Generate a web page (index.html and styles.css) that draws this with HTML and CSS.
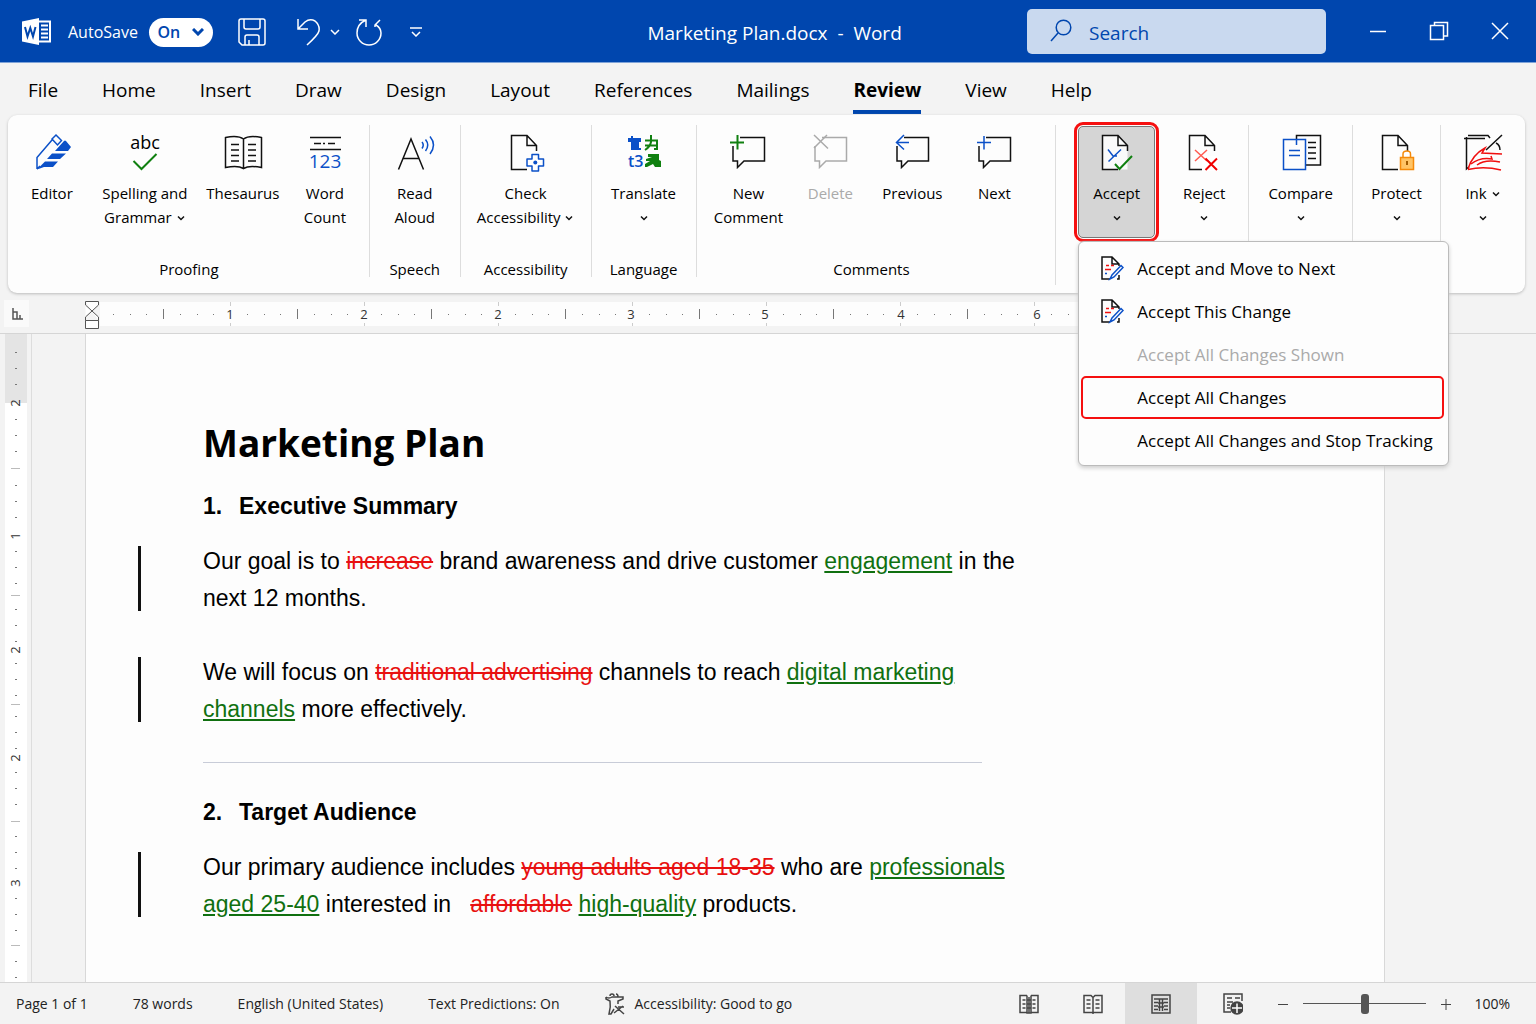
FILE: index.html
```html
<!DOCTYPE html>
<html lang="en">
	<head>
		<meta charset="UTF-8">
		<title>Marketing Plan.docx - Word</title>
		<link rel="stylesheet" href="styles.css">
	</head>
	<body>
		<!-- shared icon parts -->
		<svg class="defs" width="0" height="0" aria-hidden="true">
			<symbol id="chev" viewBox="0 0 10 10"><path d="M2 3.5L5 6.5L8 3.5"/></symbol>
			<symbol id="bubble" viewBox="0 0 40 40"><path d="M12 4.5H36.5V28H16L9.5 34.5V28H5V13"/></symbol>
			<symbol id="doc" viewBox="0 0 40 40"><path d="M21 36.5H5.5V2.5H21L30.5 12.5V18M21 2.5V12.5H30.5"/></symbol>
			<symbol id="edit" viewBox="0 0 24 26">
				<path class="k" d="M10 24H2V2H12L19 9V11M12 2V9H19M19 20V24H17"/>
				<path class="r" d="M6 10.5h3M11 10.5h3M5 14.500h6"/>
				<path class="b" d="M5 18.5h2M21 10.500L23 12.500L14 22L10 24L12 20Z"/>
			</symbol>
		</svg>

		<header class="titlebar">
			<div class="quick">
				<svg class="logo" width="30" height="28" viewBox="0 0 30 28">
					<path d="M17 3.500H28V23.500H17" fill="none" stroke="#fff" stroke-width="2"/>
					<path d="M19 7.500h7M19 11.500h7M19 15.500h7M19 19.500h7" stroke="#fff" stroke-width="2"/>
					<path d="M0 3.500L17 0V27L0 23.500Z" fill="#fff"/>
					<path d="M3 9L5.500 18.500L8.300 10L11 18.500L13.500 9" fill="none" stroke="#0046ae" stroke-width="2"/>
				</svg>
				<span class="auto">AutoSave</span>
				<button class="toggle">On
					<svg width="12" height="8" viewBox="0 0 12 8"><path d="M1 1L6 6L11 1" fill="none" stroke="#0046ae" stroke-width="3"/></svg>
				</button>
				<button class="qbtn save" aria-label="Save">
					<svg width="28" height="28" viewBox="0 0 28 28"><path d="M3 1H25Q27 1 27 3V25Q27 27 25 27H4L1 24V3Q1 1 3 1ZM6 1V9Q6 11 8 11H20Q22 11 22 9V1M7 27V19Q7 17 9 17H19Q21 17 21 19V27M11 27V22"/></svg>
				</button>
				<button class="qbtn undo" aria-label="Undo">
					<svg width="24" height="28" viewBox="0 0 24 28"><path d="M1 1V11H11M1 11L8 4Q13 0 18 3Q23 7 22 13Q21 17 10 27"/></svg>
					<svg width="10" height="6" viewBox="0 0 10 6"><path d="M1 1L5 5L9 1"/></svg>
				</button>
				<button class="qbtn redo" aria-label="Redo">
					<svg width="26" height="28" viewBox="0 0 26 28"><path d="M3 2H10V9M10 2Q1 6 1 15A12 12 0 0 0 25 15Q25 10 20 7M24 2L19 7V9"/></svg>
				</button>
				<button class="qbtn more" aria-label="Customize toolbar">
					<svg width="12" height="10" viewBox="0 0 12 10"><path d="M0 1H12M2 5L6 9L10 5"/></svg>
				</button>
			</div>
			<h1>Marketing Plan.docx&nbsp; -&nbsp; Word</h1>
			<div class="right">
				<label class="search">
					<svg width="22" height="24" viewBox="0 0 22 24"><circle cx="13.500" cy="8.500" r="7.300"/><path d="M8 14L1 22"/></svg>
					<input type="text" placeholder="Search" aria-label="Search">
				</label>
				<button class="win" aria-label="Minimize"><svg width="20" height="20" viewBox="0 0 20 20"><path d="M2 10.500H18"/></svg></button>
				<button class="win" aria-label="Restore"><svg width="20" height="20" viewBox="0 0 20 20"><path d="M1.500 4.500H14.500V18.500H1.500ZM5.500 4V1.500H18.500V15H15"/></svg></button>
				<button class="win" aria-label="Close"><svg width="20" height="20" viewBox="0 0 20 20"><path d="M2 2L18 18M18 2L2 18"/></svg></button>
			</div>
		</header>

		<nav class="tabs">
			<a href="#">File</a>
			<a href="#">Home</a>
			<a href="#">Insert</a>
			<a href="#">Draw</a>
			<a href="#">Design</a>
			<a href="#">Layout</a>
			<a href="#">References</a>
			<a href="#">Mailings</a>
			<a href="#" class="on">Review</a>
			<a href="#">View</a>
			<a href="#">Help</a>
		</nav>

		<section class="ribbon">
			<div class="group proofing">
				<div class="tools">
					<button class="tool w80">
						<svg class="ico" viewBox="0 0 40 40"><path class="b" d="M5 36V24.500L20 7M5 36L8 33M20 6L24 2L29.500 7.500L25.500 12Z"/><path fill="#0b50c8" d="M32 8Q33 7 34 8L39 14L36 18H23ZM20 20.500H34L28 26H15ZM13 28.500H26L21 34H12L5 36.500Z"/></svg>
						<span>Editor</span>
					</button>
					<button class="tool w106">
						<svg class="ico" viewBox="0 0 40 40"><text x="20" y="16" class="abc">abc</text><path class="g" d="M8.500 28L16.500 36L31.500 21"/></svg>
						<span>Spelling and<br>Grammar <svg class="cv"><use href="#chev"/></svg></span>
					</button>
					<button class="tool w90">
						<svg class="ico" viewBox="0 0 40 40"><path class="k" d="M20.500 6Q15 2 2.500 4.500V34.500Q15 32 20.500 35.500Q26 32 38.500 34.500V4.500Q26 2 20.500 6V35.500M8 11.500h8M8 17h8M8 22.500h8M8 28h8M25 11.500h8M25 17h8M25 22.500h8M25 28h8"/></svg>
						<span>Thesaurus</span>
					</button>
					<button class="tool w74">
						<svg class="ico" viewBox="0 0 40 40"><path class="k" d="M5 4.500H36M9 10.500h7M18 10.500h2M23 10.500h7M5 16.500H36"/><text x="20" y="35" class="num">123</text></svg>
						<span>Word<br>Count</span>
					</button>
				</div>
				<p>Proofing</p>
			</div>
			<div class="group">
				<div class="tools">
					<button class="tool w80">
						<svg class="ico" viewBox="0 0 40 40"><path class="k" d="M3.500 36.500L16 6L28.500 36.500M8 25.500H24"/><path class="b" d="M27 9Q29.500 12 27 15.500M30.500 6.500Q35 12 30.500 18M35 3.500Q42 12 35 21"/></svg>
						<span>Read<br>Aloud</span>
					</button>
				</div>
				<p>Speech</p>
			</div>
			<div class="group">
				<div class="tools">
					<button class="tool w106">
						<svg class="ico" viewBox="0 0 40 40"><use class="k" href="#doc"/><path d="M26 21.500H32.500V26H37.500V33H32.500V38H26V33H21V26H26Z" fill="#fff" stroke="#0b50c8" stroke-width="1.500" stroke-linejoin="round"/><circle cx="29.300" cy="29.500" r="2" fill="#0b50c8"/></svg>
						<span>Check<br>Accessibility <svg class="cv"><use href="#chev"/></svg></span>
					</button>
				</div>
				<p>Accessibility</p>
			</div>
			<div class="group">
				<div class="tools">
					<button class="tool w90">
						<svg class="ico" viewBox="0 0 40 40">
							<path fill="#0b50c8" d="M4 5H7V3H9V5H17V9H15V15H17V17H7V9H4Z"/>
							<text x="4" y="34" class="t3">t3</text>
							<path d="M21 7.500H33V16H30M27 2V9Q26 14 21 17M21 12.500H33" fill="none" stroke="#108010" stroke-width="2"/>
							<path fill="#108010" d="M24 21H35V27L37 28V34H31L29 31L23 34H21V31L26 28H22V26L28 24H24Z"/>
						</svg>
						<span>Translate<br><svg class="cv"><use href="#chev"/></svg></span>
					</button>
				</div>
				<p>Language</p>
			</div>
			<div class="group comments">
				<div class="tools">
					<button class="tool w82">
						<svg class="ico" viewBox="0 0 40 40"><use class="k" href="#bubble"/><path class="g" d="M2 9.500H16M9.500 2V16.500"/></svg>
						<span>New<br>Comment</span>
					</button>
					<button class="tool w82" disabled>
						<svg class="ico" viewBox="0 0 40 40"><use class="x" href="#bubble"/><path class="x" d="M4 2L18 15.500M17 2L4 15"/></svg>
						<span>Delete</span>
					</button>
					<button class="tool w82">
						<svg class="ico" viewBox="0 0 40 40"><use class="k" href="#bubble"/><path class="b" d="M17 9.500H4.500M12 2L4.500 9.500L12 16.500"/></svg>
						<span>Previous</span>
					</button>
					<button class="tool w82">
						<svg class="ico" viewBox="0 0 40 40"><use class="k" href="#bubble"/><path class="b" d="M3 9.500H17M10 3V16.500"/></svg>
						<span>Next</span>
					</button>
				</div>
				<p>Comments</p>
			</div>
			<div class="group changes">
				<button class="tool accept">
					<svg class="ico" viewBox="0 0 40 40"><path d="M5.500 2.500H21L30.500 12.500V36.500H5.500Z" fill="#fafafa"/><use class="k" href="#doc"/><path class="b" d="M11 16.500L16 23H20M24 16.500L11.500 28.500"/><path class="g" d="M18 31L22.500 36L35 23"/></svg>
					<span>Accept<br><svg class="cv"><use href="#chev"/></svg></span>
				</button>
				<div class="menu">
					<button><svg width="24" height="26"><use href="#edit"/></svg>Accept and Move to Next</button>
					<button><svg width="24" height="26"><use href="#edit"/></svg>Accept This Change</button>
					<button disabled>Accept All Changes Shown</button>
					<button class="hot">Accept All Changes</button>
					<button>Accept All Changes and Stop Tracking</button>
				</div>
			</div>
			<div class="group">
				<button class="tool">
					<svg class="ico" viewBox="0 0 40 40"><use class="k" href="#doc"/><path d="M18 23H34V38H18Z" fill="#fff"/><path d="M11 17L23 28M23 17L11 28" fill="none" stroke="#ff5a50" stroke-width="1.500"/><path d="M21.500 25.500L33 37M33 25.500L21.500 37" fill="none" stroke="#f00000" stroke-width="2"/></svg>
					<span>Reject<br><svg class="cv"><use href="#chev"/></svg></span>
				</button>
			</div>
			<div class="group">
				<button class="tool">
					<svg class="ico" viewBox="0 0 40 40"><path class="k" d="M15.500 6V2.500H39.500V32H25M27 9.500h8M27 14.500h8M27 20h8M27 25.500h8"/><path class="b" d="M2.500 6.500H24.500V36.500H2.500ZM8 17.500h11M8 22.500h11M15.500 7V12"/></svg>
					<span>Compare<br><svg class="cv"><use href="#chev"/></svg></span>
				</button>
			</div>
			<div class="group">
				<button class="tool">
					<svg class="ico" viewBox="0 0 40 40"><use class="k" href="#doc"/><path d="M26 24V21Q26 18 30 18Q33.500 18 33.500 21V24" fill="#fff" stroke="#f58a0a" stroke-width="1.500"/><path d="M23.500 24.500H36.500V36.500H23.500Z" fill="#ffc466" stroke="#f58a0a" stroke-width="1.500"/><path d="M30 28V32" stroke="#a05a00" stroke-width="2"/></svg>
					<span>Protect<br><svg class="cv"><use href="#chev"/></svg></span>
				</button>
			</div>
			<div class="group">
				<button class="tool">
					<svg class="ico" viewBox="0 0 40 40"><path class="k" d="M1 5.500H22M3.500 4V36L6 34M5 2.500H25L27 5M39 2L23 17M33 10Q37 12 37 17"/><path class="red" d="M5 36Q9 22 22 15L19 20L39 21M8 31Q17 24 29 26L28 23M14 32Q22 26 37 29M5 36.500Q21 33 38 37"/></svg>
					<span>Ink <svg class="cv"><use href="#chev"/></svg><br><svg class="cv"><use href="#chev"/></svg></span>
				</button>
			</div>
		</section>

		<div class="hruler">
			<button class="corner" aria-label="Tab stop"><svg width="12" height="12" viewBox="0 0 12 12"><path d="M2 0V11H12M2 4H6V11M9 7V11"/></svg></button>
			<svg class="indent" width="16" height="30" viewBox="0 0 16 30"><path d="M1.500 1.500H14.500V5L1.500 17V20.500M1.500 1.500V5L14.500 17V20.500M1.500 20.500H14.500V28.500H1.500Z"/></svg>
			<svg class="scale" height="24">
				<defs><pattern id="marks" x="-4" width="134" height="24" patternUnits="userSpaceOnUse">
					<path d="M17 12.500h1M34 12.500h1M50 12.500h1M84 12.500h1M101 12.500h1M117 12.500h1" stroke="#777" stroke-width="1"/>
					<path d="M67.500 7V17" stroke="#777"/><path d="M.500 0V4M.500 21V24" stroke="#ccc"/>
				</pattern></defs>
				<rect width="100%" height="24" fill="url(#marks)"/>
				<text x="130" y="17">1</text><text x="264" y="17">2</text><text x="398" y="17">2</text><text x="531" y="17">3</text>
				<text x="665" y="17">5</text><text x="801" y="17">4</text><text x="937" y="17">6</text>
			</svg>
		</div>

		<main class="work">
			<svg class="vruler" viewBox="0 0 22 648" height="648">
				<path d="M0 0H22V69H0Z" fill="#e4e4e4"/>
				<path d="M0 69H22V648H0Z" fill="#fff"/>
				<path class="dots" d="M11 18V60M11 85V130M11 151V195M11 217V256M11 275V312M11 329V366M11 382V418M11 438V480M11 502V542M11 564V606M11 627V648"/>
				<path d="M6 134.500h9M6 261.500h9M6 370.500h9M6 487.500h9M6 611.500h9" stroke="#bbb"/>
				<text transform="translate(15 69) rotate(-90)">2</text>
				<text transform="translate(15 202) rotate(-90)">1</text>
				<text transform="translate(15 316) rotate(-90)">2</text>
				<text transform="translate(15 424) rotate(-90)">2</text>
				<text transform="translate(15 549) rotate(-90)">3</text>
			</svg>
			<article class="page">
				<h2>Marketing Plan</h2>
				<h3><span>1.</span>Executive Summary</h3>
				<p>Our goal is to <del>increase</del> brand awareness and drive customer <ins>engagement</ins> in the<br>next 12 months.</p>
				<p>We will focus on <del>traditional advertising</del> channels to reach <ins>digital marketing<br>channels</ins> more effectively.</p>
				<hr>
				<h3><span>2.</span>Target Audience</h3>
				<p>Our primary audience includes <del>young adults aged 18-35</del> who are <ins>professionals<br>aged 25-40</ins> interested in &nbsp; <del>affordable</del> <ins>high-quality</ins> products.</p>
			</article>
		</main>

		<footer class="status">
			<span>Page 1 of 1</span>
			<span>78 words</span>
			<span>English (United States)</span>
			<span>Text Predictions: On</span>
			<span class="acc">
				<svg width="20" height="22" viewBox="0 0 20 22"><path d="M5 3Q5 1 7 1Q9 1 9 3M11 1Q13 1 13 4M1 4Q4 6 7 4H18V6L13 8V11M1 4V6L5 8Q6 14 4 21H6L9 16M10 13L19 21M18 13L9 20M13 14H19"/></svg>
				Accessibility: Good to go
			</span>
			<div class="views">
				<button aria-label="Focus"><svg width="20" height="20" viewBox="0 0 20 20"><path d="M8 1.500H1V18.500H8M12 1.500H19V18.500H12M8 1.500V19H12V1.500M10 3V19M3.500 6h3M3.500 10h3M3.500 14h3M13.500 6h3M13.500 10h3M13.500 14h3M8 6h4M8 10h4M8 14h4"/></svg></button>
				<button aria-label="Read mode"><svg width="20" height="20" viewBox="0 0 20 20"><path d="M10 3.500L8 1.500H1V18.500H19V1.500H12L10 3.500V20M3.500 6h4M3.500 10h4M3.500 14h4M12.500 6h4M12.500 10h4M12.500 14h4"/></svg></button>
				<button class="cur" aria-label="Print layout"><svg width="20" height="20" viewBox="0 0 20 20"><path d="M1 1H19V19H1ZM3 5H17M3 8.500h4M3 12h4M3 15.500h4M13 8.500h4M13 12h4M13 15.500h4M8.500 5V17M11.500 5V17M7 9h6M7 13h6"/></svg></button>
				<button class="wide" aria-label="Web layout"><svg width="20" height="22" viewBox="0 0 20 22"><path d="M8 19H1V1H19V8M4 5H9M12 5H17M4 9h6M4 12h3M4 15h3"/><circle cx="14" cy="15" r="6" fill="#444"/><path d="M14 10.500V20M9 15H19" style="stroke:#fff"/></svg></button>
				<button class="zoom" aria-label="Zoom out"><svg width="12" height="12" viewBox="0 0 12 12"><path d="M1 6.500H11"/></svg></button>
				<input type="range" min="0" max="200" value="100" aria-label="Zoom">
				<button class="zoom" aria-label="Zoom in"><svg width="12" height="12" viewBox="0 0 12 12"><path d="M1 6.500H11M6 1V12"/></svg></button>
				<span>100%</span>
			</div>
		</footer>
	</body>
</html>
```
FILE: styles.css
```css
*{ margin: 0; padding: 0; box-sizing: border-box;}
body{ min-height: 100vh; display: flex; flex-direction: column; background: #f3f3f3; color: #000; font-family: "Open Sans", "Noto Sans", sans-serif;}
button{ border: 0; background: none; font: inherit; color: inherit;}
a{ color: inherit; text-decoration: none;}
svg{ flex: none;}
.defs{ position: absolute;}

/*title bar*/
.titlebar{ height: 63px; display: grid; grid-template-columns: 34% 1fr auto; align-items: center; background: #0046ae; color: #fff; border-bottom: 1px solid #7fa3d8;}
.titlebar h1{ padding-top: 3px; font-size: 19px; font-weight: 400; text-align: center; white-space: nowrap;}
.quick{ display: flex; align-items: center; padding: 2px 0 0 22px;}
.auto{ font-size: 16px; margin: 0 11px 0 16px;}
.toggle{ width: 64px; height: 29px; margin-right: 25px; display: flex; align-items: center; justify-content: center; gap: 12px; border-radius: 15px; background: #fff; color: #0046ae; font-size: 16px; font-weight: 600;}
.qbtn{ display: flex; align-items: center;}
.qbtn svg, .win svg{ fill: none; stroke: #fff; stroke-width: 1.500;}
.save{ margin-right: 31px;}
.undo{ gap: 9px; margin-right: 16px;}
.redo{ margin-right: 28px;}
.right{ display: flex; align-items: center; padding-right: 6px;}
.search{ width: 299px; height: 45px; margin-right: 21px; padding-left: 23px; display: flex; align-items: center; gap: 17px; border-radius: 5px; background: #c9d9ef;}
.search svg{ fill: none; stroke: #0046ae; stroke-width: 1.500;}
.search input{ flex: 1; min-width: 0; padding-top: 3px; border: 0; outline: 0; background: none; font: 19px "Open Sans", sans-serif; color: #0046ae;}
.search input::placeholder{ color: #0046ae; opacity: 1;}
.win{ width: 61px; height: 45px; display: flex; align-items: center; justify-content: center;}

/*tabs*/
.tabs{ height: 52px; display: flex; gap: 44px; padding-left: 28px; font-size: 19px;}
.tabs a{ height: 51px; line-height: 54px;}
.tabs .on{ font-weight: 700; border-bottom: 4px solid #0046ae;}

/*ribbon*/
.ribbon{ height: 178px; margin: 0 11px 0 8px; padding-left: 1px; display: grid; grid-template-columns: 361fr 91fr 131fr 105fr 360fr 104fr 89fr 104fr 88fr 84fr; border-radius: 9px; background: #fdfdfd; box-shadow: 0 1px 3px #bbb; font-size: 15px; line-height: 24px;}
.group{ position: relative; height: 152px; margin-top: 10px; display: flex; flex-direction: column; align-items: center; border-right: 1px solid #ddd;}
.group:last-child, .changes{ border: 0;}
.group > p{ margin-top: auto; line-height: 16px;}
.proofing .tools{ padding-right: 4px;}
.comments{ height: 160px; padding: 0 9px 8px 0;}
.tools{ display: flex;}
.tool{ height: 112px; display: flex; flex-direction: column; align-items: center; padding-top: 8px; text-align: center; white-space: nowrap;}
.tool span{ margin-top: 8px;}
.w74{ width: 74px;}
.w80{ width: 80px;}
.w82{ width: 82px;}
.w90{ width: 90px;}
.w106{ width: 106px;}
.tool:disabled{ color: #aaa;}
.changes{ align-items: flex-end; padding: 1px 5px 0 0;}
.accept{ width: 77px; background: #d5d5d5; border: 1px solid #777; border-radius: 5px; outline: 3px solid #f51010; outline-offset: 1px; padding-top: 6px;}
.ico{ width: 40px; height: 40px; overflow: visible;}
.cv{ width: 10px; height: 10px; fill: none; stroke: #111; stroke-width: 1.500;}
.k, .b, .g, .r, .x, .red{ fill: none; stroke-width: 1.500;}
.k{ stroke: #111;}
.b{ stroke: #0b50c8;}
.g{ stroke: #108010; stroke-width: 2;}
.x{ stroke: #aaa;}
.r, .red{ stroke: #f01010;}
.abc{ font-size: 18px; text-anchor: middle;}
.num{ font-size: 19px; text-anchor: middle; fill: #0b50c8;}
.t3{ font-size: 16px; font-weight: 600; fill: #0b50c8;}

.menu{ position: absolute; z-index: 2; top: 116px; left: 22px; width: 371px; height: 225px; padding: 5px 4px 3px 2px; border: 1px solid #bbb; border-radius: 6px; background: #fdfdfd; box-shadow: 0 2px 4px #ccc; font-size: 17px;}
.menu button{ position: relative; display: block; width: 100%; height: 43px; padding-left: 56px; text-align: left; white-space: nowrap;}
.menu button svg{ position: absolute; left: 19px; top: 8px;}
.menu button:disabled{ color: #aaa;}
.menu .hot{ border: 2px solid #f51010; border-radius: 5px; padding-left: 54px;}

/*rulers*/
.hruler{ height: 41px; padding-top: 7px; display: flex; align-items: flex-start; border-bottom: 1px solid #d5d5d5;}
.corner{ width: 25px; height: 27px; margin: 0 55px 0 4px; background: #fafafa;}
.corner svg{ fill: none; stroke: #555; stroke-width: 1.500;}
.indent{ fill: #fff; stroke: #555;}
.scale{ flex: 1; margin: 2px 136px 0 0; background: #fdfdfd; font-size: 13px; text-anchor: middle; fill: #333;}

/*document*/
.work{ flex: 1; display: flex; background: #f3f3f3;}
.vruler{ width: 27px; margin-left: 5px; padding-right: 4px; border-right: 1px solid #ddd; font-size: 13px; text-anchor: middle; fill: #333;}
.dots{ fill: none; stroke: #777; stroke-width: 2; stroke-dasharray: 1 15;}
.page{ flex: 1; margin: 0 151px 0 53px; padding: 78px 0 0 117px; border: 1px solid #d8d8d8; border-width: 0 1px; background: #fdfdfd; font-family: "Liberation Sans", Arial, sans-serif; font-size: 23px; line-height: 37px;}
.page h2{ font: 700 37px/62px "Open Sans", sans-serif;}
.page h3{ font-size: 23px; margin: 14px 0 18px; line-height: 37px;}
.page h3 span{ display: inline-block; width: 36px;}
.page p{ position: relative; margin-bottom: 37px;}
.page p::before{ content: ""; position: absolute; left: -65px; top: 3px; bottom: 6px; width: 3px; background: #111;}
.page hr{ width: 779px; margin: -3px 0 31px; border: 0; border-top: 1px solid #c8ccd8;}
del{ color: #e81010;}
ins{ color: #107010;}

/*status bar*/
.status{ height: 42px; padding: 0 26px 0 16px; display: flex; align-items: center; gap: 45px; border-top: 1px solid #d5d5d5; font-size: 14px; color: #222; white-space: nowrap;}
.status svg{ fill: none; stroke: #444; stroke-width: 1.500;}
.acc{ display: flex; align-items: center; gap: 10px;}
.views{ margin-left: auto; display: flex; align-items: center; height: 100%;}
.views button{ width: 64px; height: 100%; display: flex; align-items: center; justify-content: center;}
.views .cur, .views .wide{ width: 72px;}
.views .cur{ background: #dedede;}
.views .zoom{ width: 28px;}
.views .zoom svg{ stroke-width: 1;}
.views input{ width: 123px; height: 20px; margin: 0 6px; appearance: none; background: linear-gradient(#555, #555) center / 100% 1px no-repeat;}
.views input::-webkit-slider-thumb{ appearance: none; width: 8px; height: 20px; border-radius: 3px; background: #555;}
.views span{ margin-left: 14px;}
```
